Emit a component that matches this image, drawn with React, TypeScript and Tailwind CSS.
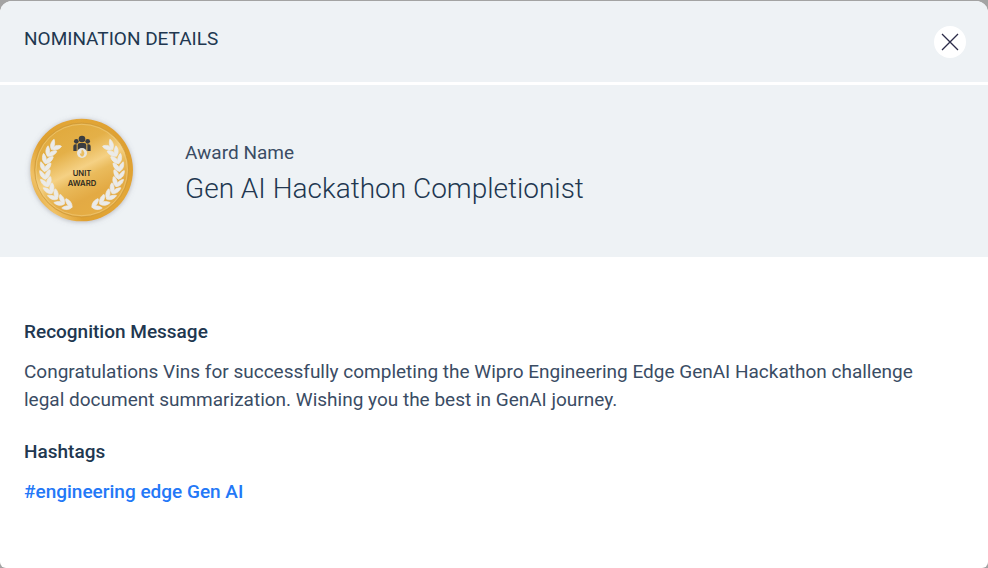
const LEAF_ANGLES = [136, 148, 160, 172, 184, 196, 208, 220, 233, 246];

function Laurel() {
  return (
    <g fill="#ebebe9" stroke="#ebebe9" strokeWidth="2" strokeLinejoin="round">
      {LEAF_ANGLES.map((angle) => (
        <g key={angle} transform={`rotate(${180 - angle}) translate(-112 0)`}>
          <path d="M1 17C-6 15-15 8-15-8Q-15-12-12-9C-6-5 1 2 1 11Z" />
          <path d="M1 17C-2 9 1-3 13-10Q17-12 17-8C17 3 11 13 1 17Z" />
        </g>
      ))}
    </g>
  );
}

function Medal() {
  return (
    <svg viewBox="0 0 372 372" className="size-[124px] shrink-0" role="img" aria-label="Unit Award">
      <defs>
        <linearGradient id="gold" x1="0.2" y1="0" x2="0.7" y2="1">
          <stop offset="0" stopColor="#e0a83a" />
          <stop offset="0.3" stopColor="#e4b048" />
          <stop offset="0.5" stopColor="#f5d184" />
          <stop offset="0.6" stopColor="#eabb5c" />
          <stop offset="0.78" stopColor="#e3aa44" />
          <stop offset="1" stopColor="#e6ae44" />
        </linearGradient>
        <linearGradient id="rim" x1="0" y1="0.8" x2="1" y2="0.2">
          <stop offset="0" stopColor="#dfa434" />
          <stop offset="0.12" stopColor="#f0c166" />
          <stop offset="0.3" stopColor="#dfa131" />
          <stop offset="0.7" stopColor="#e3a737" />
          <stop offset="1" stopColor="#dd9e2e" />
        </linearGradient>
        <filter id="shade" x="-20%" y="-20%" width="140%" height="140%">
          <feDropShadow dx="0" dy="2" stdDeviation="8" floodColor="#7a7a82" floodOpacity="0.5" />
        </filter>
      </defs>
      <circle cx="185" cy="186" r="154" fill="url(#rim)" filter="url(#shade)" />
      <circle cx="185" cy="186" r="141" fill="url(#gold)" stroke="#c8963a" strokeWidth="2" />
      <circle cx="185" cy="186" r="137" fill="none" stroke="#f3d48c" strokeWidth="1.5" />
      <g transform="translate(186 189)">
        <Laurel />
        <g transform="scale(-1 1)">
          <Laurel />
        </g>
      </g>
      <g fill="#3b3d40">
        <circle cx="186" cy="93" r="10" />
        <circle cx="169" cy="100" r="7" />
        <circle cx="203" cy="100" r="7" />
        <path d="M173 129V111Q173 105 180 105H192Q199 105 199 111V129Z" />
        <path d="M160 129V115Q160 109 166 109H170V129ZM202 129V109H206Q212 109 212 115V129Z" />
      </g>
      <circle cx="186" cy="135" r="15" fill="#e9e6de" />
      <path d="M186 124Q196 133 192 141Q190 145 186 146Q179 143 179 136L184 137Q183 130 186 124Z" fill="#eabd60" />
      <g
        fill="#2d2920"
        textAnchor="middle"
        className="font-['Inter','Liberation_Sans',sans-serif] text-[23px] font-semibold"
      >
        <text x="186" y="205">UNIT</text>
        <text x="186" y="233">AWARD</text>
      </g>
    </svg>
  );
}

export default function App() {
  return (
    <div className="min-h-screen bg-[#a3a3a3] pt-px font-[Roboto,'Liberation_Sans',sans-serif] text-[#213750]">
      <main
        role="dialog"
        aria-labelledby="dialog-title"
        className="flex min-h-[calc(100vh-1px)] flex-col overflow-hidden rounded-t-xl rounded-b-md bg-white"
      >
        <header className="flex items-start justify-between border-b-3 border-white bg-[#eef2f5] px-6 pt-6 pb-6">
          <h1 id="dialog-title" className="text-[19px] leading-7">
            NOMINATION DETAILS
          </h1>
          <button
            type="button"
            aria-label="Close"
            className="-mr-0.5 mt-px flex size-8 items-center justify-center rounded-full bg-white"
          >
            <svg viewBox="0 0 18 18" className="size-[18px]" fill="none" stroke="#2b2b48" strokeWidth="1.3">
              <path d="M1 1L17 17M17 1L1 17" />
            </svg>
          </button>
        </header>
        <section className="flex items-center gap-[41px] bg-[#eef2f5] px-5 pt-[23px] pb-[25px]">
          <Medal />
          <div className="pt-2">
            <p className="text-[19px] leading-7 text-[#3a4c64]">Award Name</p>
            <h2 className="mt-0.5 text-[28px] leading-10 font-light">Gen AI Hackathon Completionist</h2>
          </div>
        </section>
        <section className="px-6 pt-[61px]">
          <h3 className="text-[19px] leading-7 font-medium">Recognition Message</h3>
          <p className="mt-3 max-w-[920px] text-[19px] leading-7 text-[#3a4c64]">
            Congratulations Vins for successfully completing the Wipro Engineering Edge GenAI Hackathon challenge
            legal document summarization. Wishing you the best in GenAI journey.
          </p>
          <h3 className="mt-6 text-[19px] leading-7 font-medium">Hashtags</h3>
          <a href="#engineering-edge-gen-ai" className="mt-3 inline-block text-[19px] leading-7 font-medium text-[#2378f7]">
            #engineering edge Gen AI
          </a>
        </section>
      </main>
    </div>
  );
}
